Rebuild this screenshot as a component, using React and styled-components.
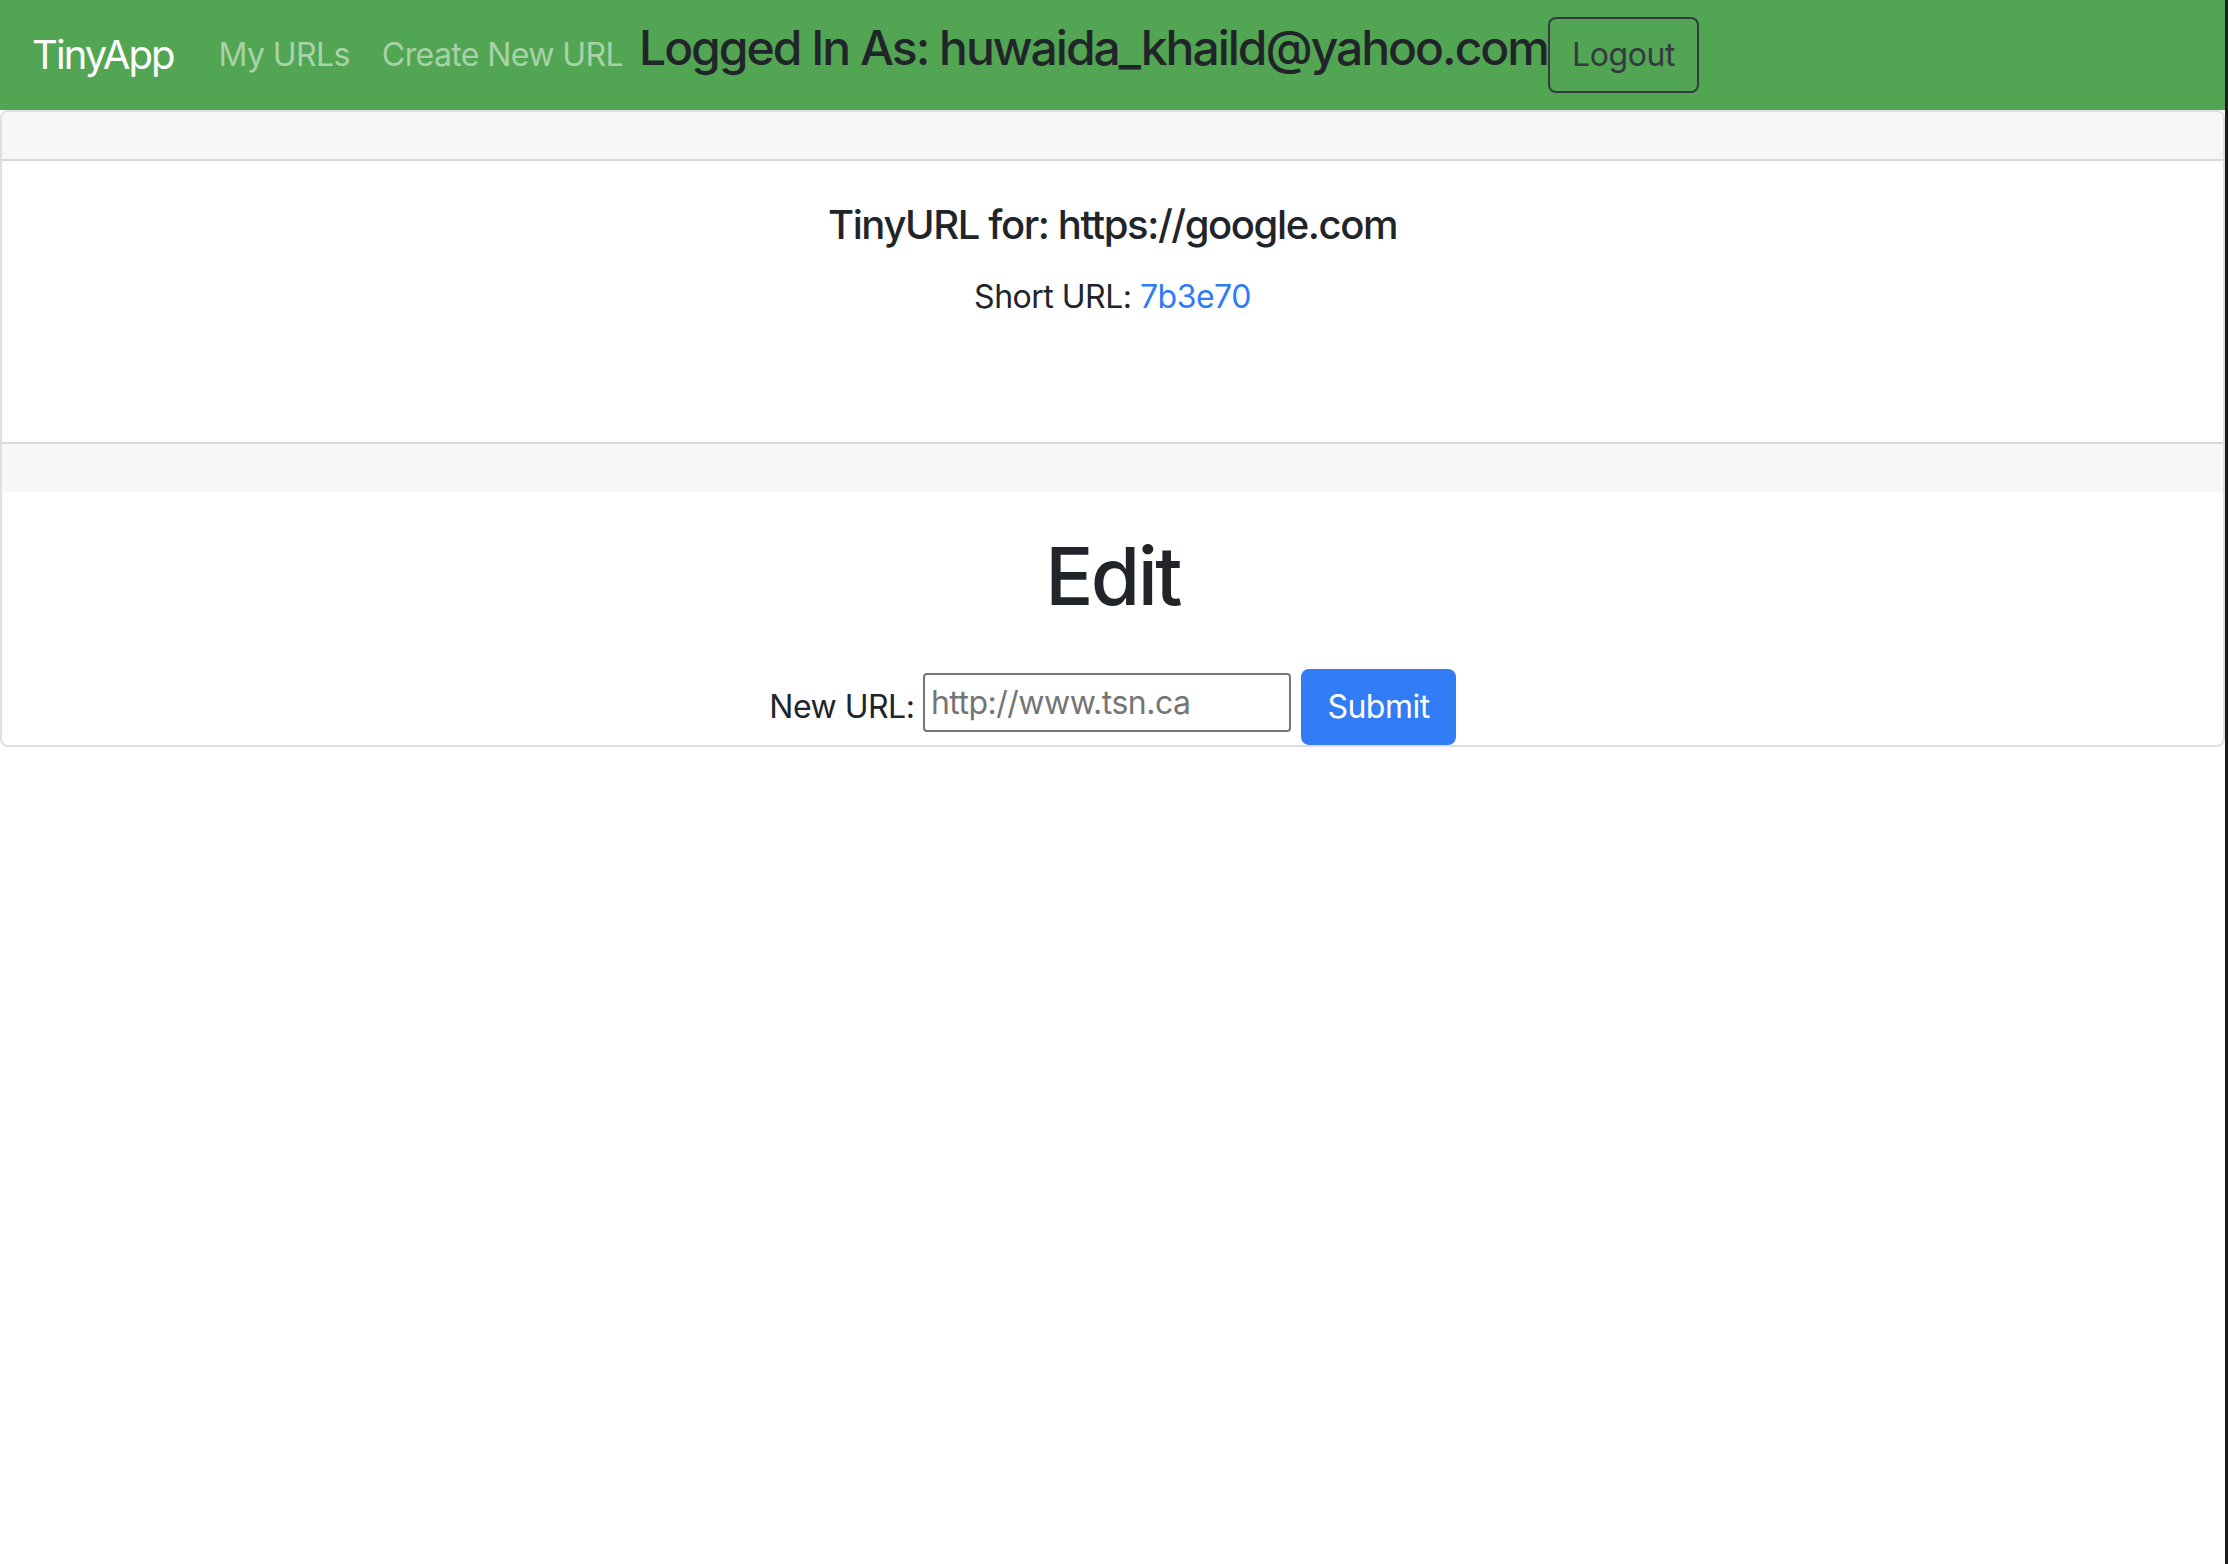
import React from "react";
import styled, { createGlobalStyle } from "styled-components";

const GlobalStyle = createGlobalStyle`
  html, body {
    margin: 0;
    padding: 0;
    background: #fff;
  }
  body {
    font-family: Inter, "Liberation Sans", Arial, sans-serif;
    color: #212529;
    font-size: 32px;
    line-height: 1.5;
  }
  * {
    box-sizing: border-box;
  }
`;

const Page = styled.div`
  min-height: 100vh;
  border-right: 3px solid #1c1c1c;
`;

const Navbar = styled.nav`
  display: flex;
  align-items: center;
  height: 110px;
  padding: 0 32px;
  background: #52a552;
`;

const Brand = styled.a`
  font-size: 40px;
  line-height: 60px;
  color: #fff;
  text-decoration: none;
  margin-right: 29px;
  letter-spacing: -1.9px;
`;

const NavLink = styled.a`
  font-size: 32px;
  line-height: 48px;
  padding: 0 16px;
  color: rgba(255, 255, 255, 0.5);
  text-decoration: none;
  letter-spacing: -0.6px;
`;

const UserLabel = styled.h4`
  margin: 0 0 14px;
  font-size: 48px;
  font-weight: 500;
  line-height: 1.2;
  color: #212529;
  letter-spacing: -2px;
`;

const OutlineButton = styled.button`
  font-family: inherit;
  font-size: 32px;
  line-height: 48px;
  padding: 12px 22px;
  border: 2px solid #343a40;
  border-radius: 8px;
  background: transparent;
  color: #343a40;
  letter-spacing: -0.4px;
`;

const Card = styled.div`
  border: 2px solid rgba(0, 0, 0, 0.125);
  border-radius: 8px;
  overflow: hidden;
`;

const CardBand = styled.div`
  height: ${(p) => (p.$top ? 49 : 50)}px;
  background: #f7f7f7;
  border-top: ${(p) => (p.$top ? "none" : "2px solid rgba(0,0,0,0.125)")};
  border-bottom: ${(p) => (p.$top ? "2px solid rgba(0,0,0,0.125)" : "none")};
`;

const CardBody = styled.div`
  padding: 40px 40px 0;
  height: 281px;
  text-align: center;
`;

const CardTitle = styled.h5`
  margin: 0 0 24px;
  font-size: 40px;
  font-weight: 500;
  line-height: 1.2;
  letter-spacing: -1.4px;
`;

const CardText = styled.p`
  margin: 0;
  font-size: 32px;
  letter-spacing: -0.5px;
`;

const ShortLink = styled.a`
  color: #2f7bf5;
  text-decoration: none;
`;

const EditSection = styled.div`
  padding-top: 36px;
  text-align: center;
`;

const EditHeading = styled.h1`
  margin: 0 0 45px;
  font-size: 80px;
  font-weight: 500;
  line-height: 1.2;
  letter-spacing: -2.6px;
`;

const EditForm = styled.form`
  font-size: 32px;
  line-height: 1.5;
  letter-spacing: -0.5px;
`;

const UrlInput = styled.input`
  width: 368px;
  height: 59px;
  padding: 0 6px;
  margin: 0 2px 0 0;
  vertical-align: 4px;
  font-family: inherit;
  font-size: 32px;
  letter-spacing: -0.5px;
  border: 2px solid #767676;
  border-radius: 4px;
  color: #212529;
  &::placeholder {
    color: #757575;
  }
`;

const SubmitButton = styled.button`
  font-family: inherit;
  font-size: 32px;
  line-height: 48px;
  padding: 12px 24px;
  border: 2px solid #327cf6;
  border-radius: 8px;
  background: #327cf6;
  color: #fff;
  letter-spacing: -0.5px;
`;

export default function App() {
  return (
    <Page>
      <GlobalStyle />
      <Navbar>
        <Brand href="#">TinyApp</Brand>
        <NavLink href="#">My URLs</NavLink>
        <NavLink href="#">Create New URL</NavLink>
        <UserLabel>Logged In As: huwaida_khaild@yahoo.com</UserLabel>
        <OutlineButton type="button">Logout</OutlineButton>
      </Navbar>
      <Card>
        <CardBand $top />
        <CardBody>
          <CardTitle>TinyURL for: https://google.com</CardTitle>
          <CardText>
            Short URL: <ShortLink href="#">7b3e70</ShortLink>
          </CardText>
        </CardBody>
        <CardBand />
        <EditSection>
          <EditHeading>Edit</EditHeading>
          <EditForm onSubmit={(e) => e.preventDefault()}>
            New URL: <UrlInput type="text" placeholder="http://www.tsn.ca" />{" "}
            <SubmitButton type="submit">Submit</SubmitButton>
          </EditForm>
        </EditSection>
      </Card>
    </Page>
  );
}
